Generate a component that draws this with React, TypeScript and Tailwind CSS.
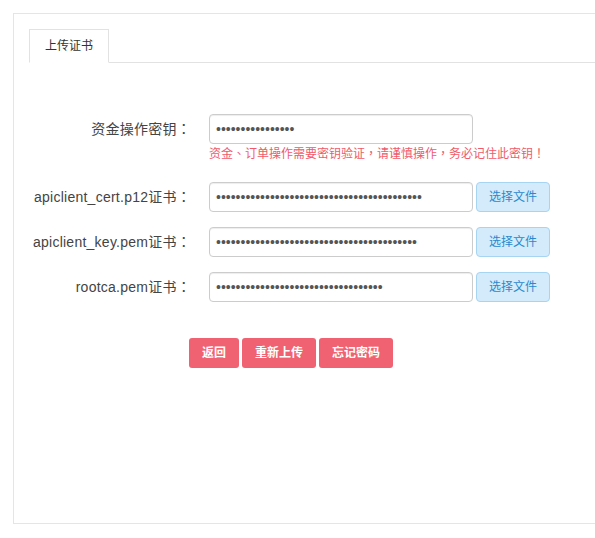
import React from "react";

const FONT = { fontFamily: '"Liberation Sans", Arial, "Noto Sans CJK SC", sans-serif' };
const PUNCT = { fontFamily: '"Noto Sans CJK TC", "Noto Sans CJK SC", sans-serif' };

function P({ c }: { c: string }) {
  return <span style={PUNCT}>{c}</span>;
}

function Row({ label, dots, file }: { label: string; dots: number; file?: boolean }) {
  return (
    <div className="flex items-center h-[30px]">
      <div className="w-[162px] shrink-0 text-right text-[14px] tracking-[0.25px] text-[#444] [text-spacing-trim:space-all]">
        {label}
        <P c="：" />
      </div>
      <div className="ml-[18px] flex items-center">
        <input
          type="password"
          readOnly
          defaultValue={"a".repeat(dots)}
          className="w-[264px] h-[30px] rounded-[4px] border border-[#ccc] bg-white px-[6px] text-[14px] text-[#555] outline-none shadow-[inset_0_1px_1px_rgba(0,0,0,0.075)]"
          style={FONT}
        />
        {file && (
          <button className="ml-[3px] w-[74px] h-[30px] rounded-[4px] border border-[#a6d4f2] bg-[#d3ebfb] text-[12px] text-[#2a89cc]">
            选择文件
          </button>
        )}
      </div>
    </div>
  );
}

export default function App() {
  return (
    <div className="w-[595px] h-[538px] overflow-hidden bg-white" style={FONT}>
      <div className="ml-[13px] mt-[13px] w-[600px] h-[511px] border border-[#e5e5e5] pt-[15px] pl-[15px]">
        <div className="flex border-b border-[#e2e2e2]">
          <div className="w-[80px] h-[34px] -mb-px border border-[#e2e2e2] border-b-white bg-white flex items-center justify-center text-[12px] text-[#333]">
            上传证书
          </div>
        </div>
        <div className="pt-[51px]">
          <Row label="资金操作密钥" dots={16} />
          <div className="ml-[180px] mt-[1px] h-[17px] flex items-center text-[12px] leading-[17px] text-[#f05a6b] whitespace-nowrap [text-spacing-trim:space-all]">
            <span>
              资金<P c="、" />订单操作需要密钥验证<P c="，" />请谨慎操作<P c="，" />务必记住此密钥<P c="！" />
            </span>
          </div>
          <div className="mt-[20px] flex flex-col gap-[15px]">
            <Row label="apiclient_cert.p12证书" dots={42} file />
            <Row label="apiclient_key.pem证书" dots={41} file />
            <Row label="rootca.pem证书" dots={34} file />
          </div>
          <div className="ml-[160px] mt-[36px] flex gap-[3px]">
            <button className="w-[50px] h-[30px] rounded-[3px] bg-[#f06272] text-white text-[12px] font-bold">返回</button>
            <button className="w-[74px] h-[30px] rounded-[3px] bg-[#f06272] text-white text-[12px] font-bold">重新上传</button>
            <button className="w-[74px] h-[30px] rounded-[3px] bg-[#f06272] text-white text-[12px] font-bold">忘记密码</button>
          </div>
        </div>
      </div>
    </div>
  );
}
